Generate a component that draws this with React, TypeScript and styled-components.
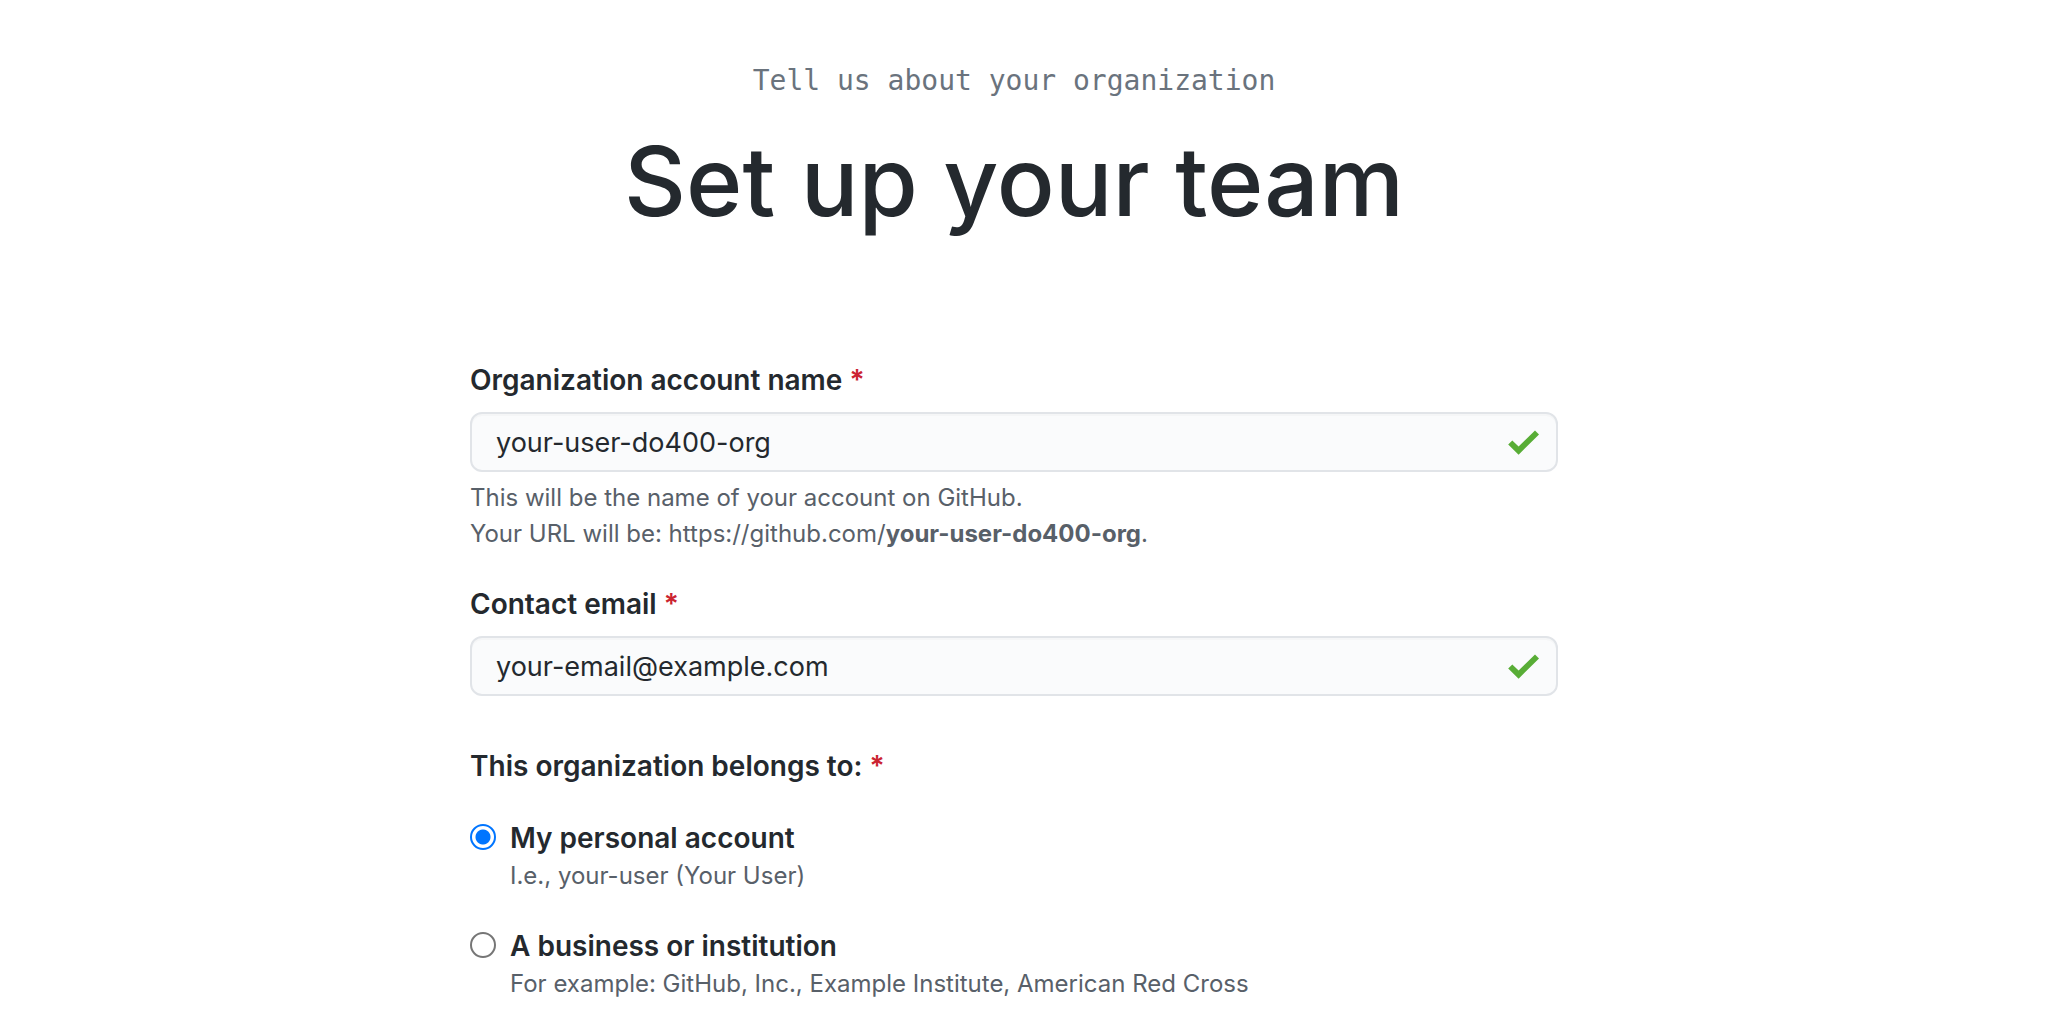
import React, { useId, useState } from "react";
import styled, { createGlobalStyle } from "styled-components";

const GlobalStyle = createGlobalStyle`
  *, *::before, *::after { box-sizing: border-box; }
  body {
    margin: 0;
    background: #ffffff;
    color: #24292e;
    font-family: Inter, "Liberation Sans", sans-serif;
    font-size: 28px;
    line-height: 42px;
  }
`;

const Page = styled.main`
  padding: 60px 20px 36px 0;
`;

const Header = styled.header`
  text-align: center;
`;

const Eyebrow = styled.p`
  margin: 0 0 19px;
  color: #6a737d;
  font-family: "DejaVu Sans Mono", monospace;
`;

const Title = styled.h1`
  margin: 0;
  font-size: 96px;
  font-weight: 500;
  line-height: 120px;
`;

const Form = styled.form`
  max-width: 1088px;
  margin: 118px auto 0;
`;

const Field = styled.div`
  margin-bottom: 31px;
`;

const Label = styled.label`
  display: block;
  margin-bottom: 11px;
  font-weight: 600;
`;

const Asterisk = styled.span`
  color: #cb2431;
`;

const InputWrap = styled.div`
  position: relative;
`;

const TextInput = styled.input`
  display: block;
  width: 100%;
  height: 60px;
  padding: 0 60px 0 24px;
  border: 2px solid #e1e4e8;
  border-radius: 12px;
  background: #fafbfc;
  box-shadow: inset 0 2px 0 rgba(225, 228, 232, 0.2);
  color: #24292e;
  font: inherit;
  font-size: 27px;
  outline: none;
`;

const Check = styled.svg`
  position: absolute;
  top: 18px;
  right: 19px;
  width: 31px;
  height: 25px;
  fill: #58ad36;
`;

const Help = styled.p`
  margin: 8px 0 0;
  color: #586069;
  font-size: 24px;
  line-height: 36px;
`;

const Group = styled.fieldset`
  min-width: 0;
  margin: 49px 0 0;
  padding: 0;
  border: 0;
`;

const Legend = styled.legend`
  margin-bottom: 30px;
  padding: 0;
  font-weight: 600;
`;

const Option = styled.div`
  display: grid;
  grid-template-columns: 26px 1fr;
  column-gap: 14px;
  margin-bottom: 32px;
`;

const Radio = styled.input`
  appearance: none;
  width: 26px;
  height: 26px;
  margin: 7px 0 0;
  border: 2px solid #767676;
  border-radius: 50%;
  background: #ffffff;

  &:checked {
    border-color: #0075ff;
    background: radial-gradient(circle, #0075ff 7px, #ffffff 8px);
  }
`;

const OptionLabel = styled.label`
  display: block;
  font-weight: 600;
`;

const OptionHint = styled.span`
  display: block;
  color: #586069;
  font-size: 24px;
  line-height: 34px;
`;

type TextFieldProps = {
  label: string;
  type: string;
  value: string;
  onChange: (value: string) => void;
  children?: React.ReactNode;
};

function TextField({ label, type, value, onChange, children }: TextFieldProps) {
  const id = useId();
  return (
    <Field>
      <Label htmlFor={id}>
        {label} <Asterisk>*</Asterisk>
      </Label>
      <InputWrap>
        <TextInput
          id={id}
          type={type}
          value={value}
          spellCheck={false}
          onChange={(e) => onChange(e.target.value)}
        />
        <Check viewBox="0 0 31 25" aria-hidden="true">
          <path d="M0.2 14.6L4.3 10.5L10.6 16.4L27 0.4L31 4.4L10.6 24.7Z" />
        </Check>
      </InputWrap>
      {children}
    </Field>
  );
}

const owners = [
  { id: "personal", label: "My personal account", hint: "I.e., your-user (Your User)" },
  {
    id: "business",
    label: "A business or institution",
    hint: "For example: GitHub, Inc., Example Institute, American Red Cross",
  },
];

export default function App() {
  const [name, setName] = useState("your-user-do400-org");
  const [email, setEmail] = useState("your-email@example.com");
  const [owner, setOwner] = useState("personal");

  return (
    <>
      <GlobalStyle />
      <Page>
        <Header>
          <Eyebrow>Tell us about your organization</Eyebrow>
          <Title>Set up your team</Title>
        </Header>
        <Form>
          <TextField label="Organization account name" type="text" value={name} onChange={setName}>
            <Help>
              This will be the name of your account on GitHub.
              <br />
              Your URL will be: https://github.com/<b>{name}</b>.
            </Help>
          </TextField>
          <TextField label="Contact email" type="email" value={email} onChange={setEmail} />
          <Group>
            <Legend>
              This organization belongs to: <Asterisk>*</Asterisk>
            </Legend>
            {owners.map((o) => (
              <Option key={o.id}>
                <Radio
                  type="radio"
                  name="owner"
                  id={o.id}
                  checked={owner === o.id}
                  onChange={() => setOwner(o.id)}
                  aria-describedby={`${o.id}-hint`}
                />
                <div>
                  <OptionLabel htmlFor={o.id}>{o.label}</OptionLabel>
                  <OptionHint id={`${o.id}-hint`}>{o.hint}</OptionHint>
                </div>
              </Option>
            ))}
          </Group>
        </Form>
      </Page>
    </>
  );
}
